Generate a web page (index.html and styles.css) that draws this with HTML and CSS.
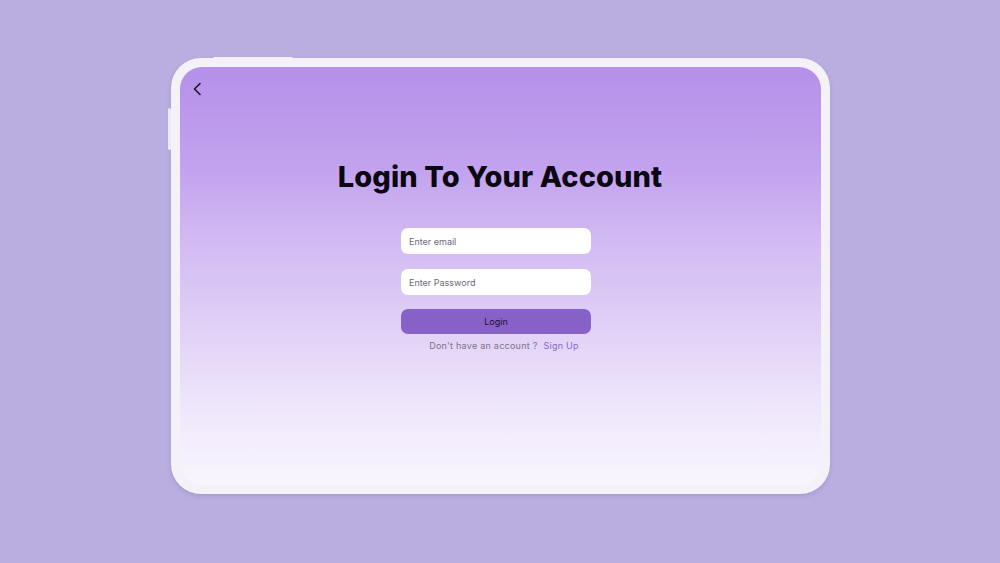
FILE: index.html
```html
<!DOCTYPE html>
<html>
<head>
<meta charset="utf-8">
<link rel="stylesheet" href="styles.css">
</head>
<body>
<div class="stage">
  <div class="tablet">
    <span class="btn-top"></span>
    <span class="btn-side"></span>
    <div class="screen">
      <div class="topbar">
        <svg class="back" width="12" height="14" viewBox="0 0 12 14"><path d="M8 1.5 L2.5 7 L8 12.5" fill="none" stroke="#1c1230" stroke-width="1.6" stroke-linecap="round" stroke-linejoin="round"/></svg>
      </div>
      <h1 class="title">Login To Your Account</h1>
      <form class="form">
        <div class="field">Enter email</div>
        <div class="field">Enter Password</div>
        <div class="login">Login</div>
        <p class="signup">Don't have an account ?<a class="link">Sign Up</a></p>
      </form>
    </div>
  </div>
</div>
</body>
</html>
```
FILE: styles.css
```css
html, body {
  margin: 0;
  padding: 0;
}
body {
  width: 1000px;
  height: 563px;
  background: #b9aedf;
  font-family: "Inter", "Noto Sans", sans-serif;
  overflow: hidden;
}
.stage {
  display: flex;
  justify-content: center;
  padding-top: 58px;
}
.tablet {
  position: relative;
  width: 641px;
  height: 418px;
  padding: 9px;
  background: #f4f1f8;
  border-radius: 30px;
  box-shadow: 0 2px 4px rgba(120, 100, 160, 0.25);
}
.btn-top {
  position: absolute;
  top: -1px;
  left: 42px;
  width: 80px;
  height: 3px;
  background: #f4f1f8;
  border-radius: 2px;
}
.btn-side {
  position: absolute;
  left: -3px;
  top: 50px;
  width: 3px;
  height: 42px;
  background: #ecebf3;
  border-radius: 2px;
}
.screen {
  height: 100%;
  border-radius: 22px;
  background: linear-gradient(180deg, #b690e9 0%, #c3a3ee 25%, #d2bbf3 42%, #e0d0f6 62%, #eee5fb 80%, #f8f6fc 100%);
  display: flex;
  flex-direction: column;
  align-items: center;
}
.topbar {
  align-self: stretch;
  padding: 15px 0 0 12px;
  height: 14px;
}
.back {
  display: block;
}
.title {
  margin: 63px 0 0;
  font-size: 29px;
  font-weight: 800;
  letter-spacing: 0.1px;
  color: #0b0713;
  line-height: 36px;
}
.form {
  margin: 33px 8px 0 0;
  width: 190px;
  display: flex;
  flex-direction: column;
}
.field {
  height: 26px;
  background: #ffffff;
  border-radius: 7px;
  font-size: 9px;
  color: #6d6777;
  display: flex;
  align-items: center;
  padding-left: 8px;
  margin-bottom: 15px;
}
.login {
  height: 25px;
  margin-top: -1px;
  background: #8861c8;
  border-radius: 7px;
  color: #1a1030;
  font-size: 9px;
  display: flex;
  align-items: center;
  justify-content: center;
}
.signup {
  margin: 6px 0 0;
  font-size: 9px;
  letter-spacing: 0.25px;
  color: #7b7288;
  text-align: center;
  padding-left: 16px;
}
.link {
  color: #8a66cf;
  margin-left: 6px;
}
```
